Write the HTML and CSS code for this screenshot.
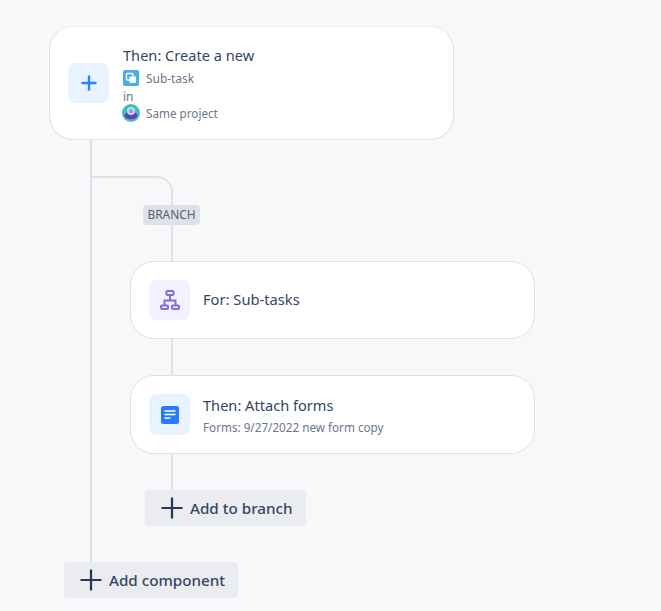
FILE: index.html
```html
<!DOCTYPE html>
<html lang="en">
<head>
    <meta charset="UTF-8">
    <meta name="viewport" content="width=device-width, initial-scale=1.0">
    <title>Rule components</title>
    <link rel="stylesheet" href="styles.css">
</head>
<body>
    <div class="rule">
        <div class="card card-top">
            <div class="icon-box icon-blue">
                <svg width="16" height="16" viewBox="0 0 16 16"><path d="M8 1.500v13M1.500 8h13" stroke="#2684ff" stroke-width="2.400" stroke-linecap="round" fill="none"/></svg>
            </div>
            <div class="card-text">
                <div class="card-title">Then: Create a new</div>
                <div class="meta-row">
                    <svg class="meta-icon" width="16" height="16" viewBox="0 0 16 16">
                        <rect width="16" height="16" rx="2" fill="#4bade8"/>
                        <rect x="3.500" y="3.500" width="6.500" height="6.500" rx="1" fill="none" stroke="#fff" stroke-width="1.300"/>
                        <rect x="6.500" y="6.500" width="6.500" height="6.500" rx="1" fill="#fff"/>
                    </svg>
                    <span>Sub-task</span>
                </div>
                <div class="meta-in">in</div>
                <div class="meta-row meta-project">
                    <svg class="meta-avatar" width="18" height="18" viewBox="0 0 18 18">
                        <circle cx="9" cy="9" r="9" fill="#3fbfb8"/>
                        <ellipse cx="9" cy="11.500" rx="6.500" ry="3.800" fill="#6a3fb0"/>
                        <circle cx="9" cy="7" r="4" fill="#c9d6ee"/>
                        <circle cx="9" cy="7" r="2" fill="#8a9fd0"/>
                    </svg>
                    <span>Same project</span>
                </div>
            </div>
        </div>

        <div class="trunk">
            <div class="elbow"></div>
            <div class="badge">BRANCH</div>
            <div class="link link-badge"></div>
            <div class="card card-branch card-for">
                <div class="icon-box icon-purple">
                    <svg width="20" height="20" viewBox="0 0 20 20" fill="none" stroke="#7f6fdc" stroke-width="2">
                        <rect x="6.500" y="1" width="7" height="4" rx="1"/>
                        <rect x="1" y="15.500" width="7" height="3.500" rx="1"/>
                        <rect x="12" y="15.500" width="7" height="3.500" rx="1"/>
                        <path d="M10 5v5.500M4.500 15.500v-5h11v5"/>
                    </svg>
                </div>
                <div class="card-text">
                    <div class="card-title">For: Sub-tasks</div>
                </div>
            </div>
            <div class="link"></div>
            <div class="card card-branch card-forms">
                <div class="icon-box icon-blue">
                    <svg width="18" height="18" viewBox="0 0 18 18">
                        <rect width="18" height="18" rx="2.500" fill="#2979ff"/>
                        <path d="M3.500 5h11M3.500 8.500h11M3.500 12h6" stroke="#fff" stroke-width="1.700" fill="none"/>
                    </svg>
                </div>
                <div class="card-text">
                    <div class="card-title">Then: Attach forms</div>
                    <div class="card-sub">Forms: 9/27/2022 new form copy</div>
                </div>
            </div>
            <div class="link"></div>
            <button class="btn btn-branch"><svg width="24" height="24" viewBox="0 0 24 24"><path d="M12 1.500v21M1.500 12h21" stroke="#253858" stroke-width="2.200" fill="none"/></svg>Add to branch</button>
        </div>

        <button class="btn btn-component"><svg width="24" height="24" viewBox="0 0 24 24"><path d="M12 1.500v21M1.500 12h21" stroke="#253858" stroke-width="2.200" fill="none"/></svg>Add component</button>
    </div>
</body>
</html>
```

FILE: styles.css
```css
body {
    margin: 0;
    background-color: #f7f8fa;
    font-family: "Noto Sans", sans-serif;
    color: #344563;
}
.rule {
    padding: 26px 0 13px 49px;
}
.card {
    display: flex;
    align-items: center;
    box-sizing: border-box;
    width: 405px;
    padding: 0 18px;
    background-color: white;
    border: 1px solid #dfe1e6;
    border-radius: 24px;
}
.card-top {
    height: 114px;
    border-top-color: #ebecf0;
}
.card-branch {
    height: 78px;
    margin-left: 38px;
}
.card-for .card-title {
    margin-bottom: 2px;
    font-size: 14.7px;
}
.card-forms {
    height: 79px;
}
.card-forms .icon-box {
    height: 41px;
}
.icon-box {
    display: flex;
    align-items: center;
    justify-content: center;
    flex: none;
    width: 41px;
    height: 40px;
    margin-right: 13px;
    border-radius: 8px;
}
.card-top .icon-box {
    margin-right: 14px;
}
.icon-blue {
    background-color: #e9f2ff;
}
.icon-purple {
    background-color: #f3f0ff;
}
.card-title {
    font-size: 14.6px;
    line-height: 20px;
}
.card-sub {
    margin-top: 4px;
    font-size: 11.7px;
    line-height: 16px;
    color: #6b778c;
}
.meta-row {
    display: flex;
    align-items: center;
    gap: 7px;
    height: 16px;
    margin-top: 5px;
    font-size: 11.9px;
    color: #6b778c;
}
.meta-in {
    font-size: 11.9px;
    line-height: 16px;
    margin-top: 2px;
    color: #6b778c;
}
.meta-project {
    height: 18px;
    margin-top: 0;
    gap: 6px;
    font-size: 11.7px;
}
.meta-avatar {
    margin-left: -1px;
}
.trunk {
    margin-left: 41px;
    padding-top: 36px;
    padding-bottom: 36px;
    border-left: 2px solid #dfe1e6;
}
.elbow {
    box-sizing: border-box;
    width: 81px;
    height: 65px;
    margin-bottom: -36px;
    border-top: 2px solid #dfe1e6;
    border-right: 2px solid #dfe1e6;
    border-top-right-radius: 16px;
}
.badge {
    position: relative;
    width: 57px;
    height: 20px;
    margin-left: 51px;
    background-color: #dfe1e6;
    border-radius: 4px;
    font-size: 11.9px;
    line-height: 19px;
    text-align: center;
    color: #505f79;
}
.link {
    width: 2px;
    height: 36px;
    margin-left: 79px;
    background-color: #dfe1e6;
}
.btn {
    display: flex;
    align-items: center;
    gap: 6px;
    height: 36px;
    padding: 0 13px 0 15px;
    border: none;
    border-radius: 3px;
    background-color: #ebecf0;
    font-family: "Noto Sans", sans-serif;
    font-size: 15.2px;
    font-weight: 500;
    color: #344563;
}
.btn-branch {
    margin-left: 53px;
}
.btn-component {
    margin-left: 15px;
}
```
